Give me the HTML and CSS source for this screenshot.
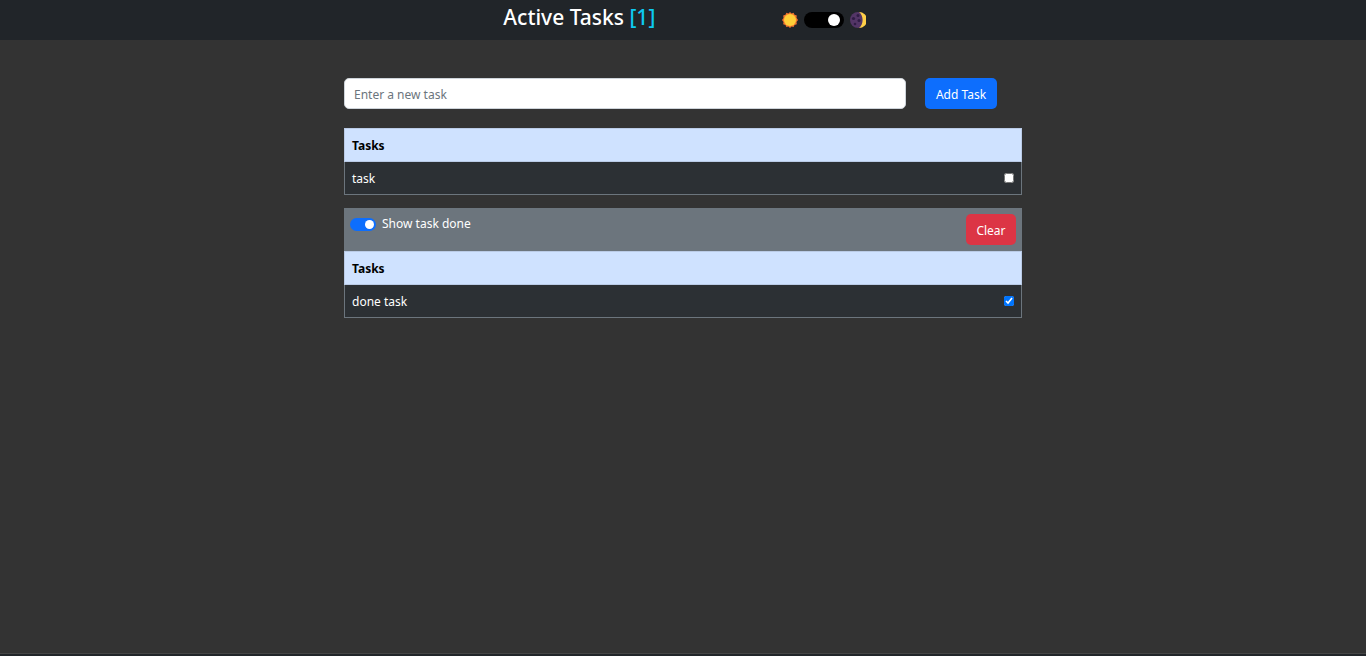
FILE: index.html
```html
<!DOCTYPE html>
<html lang="en">
<head>
<meta charset="utf-8">
<meta name="viewport" content="width=device-width, initial-scale=1">
<title>Active Tasks</title>
<link rel="stylesheet" href="styles.css">
</head>
<body>
<header class="topbar">
  <h1 class="title">Active Tasks <span class="count">[1]</span></h1>
  <div class="theme">
    <svg class="theme-icon" viewBox="0 0 16 16" aria-hidden="true">
      <path fill="#f4772e" d="M8 0l1.600 1.500L11.600 .8l.9 2 2.300.6-.3 2.300L16 8l-1.500 1.900.3 2.300-2.300.8-.9 2-2-.6L8 16l-1.600-1.500-2 .6-.9-2.100-2.300-.7.3-2.300L0 8l1.500-2-.3-2.400 2.300-.8.9-2 2 .7z"/>
      <circle cx="8" cy="8" r="6" fill="#ffcf38"/>
    </svg>
    <input class="theme-switch" type="checkbox" role="switch" aria-label="Dark theme" checked>
    <svg class="theme-icon" viewBox="0 0 16 16" aria-hidden="true">
      <circle cx="8" cy="8" r="8" fill="#533566"/>
      <path fill="#ffcf48" d="M9 0A8 8 0 0 1 9 16C13.800 12.500 13.800 3.500 9 0z"/>
      <g fill="#2f1c45"><circle cx="8" cy="3.500" r="1.500"/><circle cx="3.500" cy="6.500" r="1.600"/><circle cx="9" cy="8.500" r="1.500"/><circle cx="5" cy="12" r="1.300"/></g>
    </svg>
  </div>
</header>
<main class="content">
  <form class="new-task">
    <input class="task-input" type="text" placeholder="Enter a new task" aria-label="New task">
    <button class="btn btn-add" type="button">Add Task</button>
  </form>
  <table class="tasks">
    <thead><tr><th colspan="2" scope="col">Tasks</th></tr></thead>
    <tbody><tr>
      <td><label for="t1">task</label></td>
      <td class="check-cell"><input class="check" id="t1" type="checkbox"></td>
    </tr></tbody>
  </table>
  <section class="done">
    <div class="done-bar">
      <div class="done-toggle">
        <input class="done-switch" id="show" type="checkbox" role="switch" checked>
        <label for="show">Show task done</label>
      </div>
      <button class="btn btn-clear" type="button">Clear</button>
    </div>
    <table class="tasks">
      <thead><tr><th colspan="2" scope="col">Tasks</th></tr></thead>
      <tbody><tr>
        <td><label for="t2">done task</label></td>
        <td class="check-cell"><input class="check" id="t2" type="checkbox" checked></td>
      </tr></tbody>
    </table>
  </section>
</main>
<footer class="footer"></footer>
</body>
</html>
```

FILE: styles.css
```css
* { box-sizing: border-box; }

body {
  margin: 0;
  min-height: 100vh;
  display: flex;
  flex-direction: column;
  background: #333;
  color: #fff;
  font: 12px/20px "Segoe UI", "Noto Sans", sans-serif;
}

.topbar {
  display: grid;
  grid-template-columns: repeat(12, 1fr);
  height: 40px;
  background: #212529;
}

.title {
  grid-column: 5 / 7;
  margin: 0 0 0 48px;
  padding-top: 4px;
  font-size: 21px;
  line-height: 26px;
  font-weight: 500;
  white-space: nowrap;
}

.count { color: #0dcaf0; }

.theme {
  grid-column: 7 / 9;
  justify-self: end;
  display: flex;
  align-items: center;
  gap: 6px;
  margin-right: 45px;
}

.title, .theme { grid-row: 1; }

.theme-icon { width: 16px; height: 16px; }

.theme-switch, .done-switch {
  appearance: none;
  display: flex;
  align-items: center;
  justify-content: flex-end;
  margin: 0;
  border-radius: 8px;
}

.theme-switch::before, .done-switch::before {
  content: "";
  border-radius: 50%;
  background: #fff;
}

.theme-switch:not(:checked), .done-switch:not(:checked) { justify-content: flex-start; }

.theme-switch { width: 40px; height: 16px; padding: 0 4px; background: #000; }
.theme-switch::before { width: 12px; height: 12px; }

.done-switch { width: 26px; height: 13px; padding: 0 2px; background: #0d6efd; }
.done-switch::before { width: 9px; height: 9px; }

.content {
  flex: 1;
  width: 100%;
  max-width: 678px;
  margin: 0 auto;
  padding-top: 38px;
}

.new-task {
  display: flex;
  gap: 19px;
  margin-bottom: 19px;
  padding-right: 25px;
}

.task-input {
  flex: 1;
  min-width: 0;
  height: 31px;
  padding: 2px 9px 0;
  border: 1px solid #ced4da;
  border-radius: 5px;
  background: #fff;
  color: #212529;
  font: inherit;
}

.task-input::placeholder { color: #6c757d; opacity: 1; }

.btn {
  height: 31px;
  padding: 2px 8px 0;
  border: 0;
  border-radius: 5px;
  color: #fff;
  font: inherit;
  white-space: nowrap;
}

.btn-add { width: 72px; background: #0d6efd; }
.btn-clear { width: 50px; background: #dc3545; }

.tasks {
  width: 100%;
  border-collapse: collapse;
  border: 1px solid #6c757d;
  background: #2c3034;
}

.tasks th {
  height: 33px;
  padding: 2px 7px 0;
  border: 1px solid #bacbe6;
  background: #cfe2ff;
  color: #000;
  text-align: left;
}

.tasks td { height: 33px; padding: 2px 7px 0; }
.tasks .check-cell { width: 32px; padding-top: 0; text-align: right; }

.check {
  display: block;
  width: 10px;
  height: 10px;
  margin: 0 0 0 auto;
}

.done { margin-top: 13px; }

.done-bar {
  display: flex;
  justify-content: space-between;
  align-items: flex-start;
  padding: 6px;
  background: #6c757d;
}

.done-toggle { display: flex; align-items: center; gap: 6px; }

.footer {
  height: 3px;
  border-top: 1px solid #454545;
  background: #212529;
}
```
